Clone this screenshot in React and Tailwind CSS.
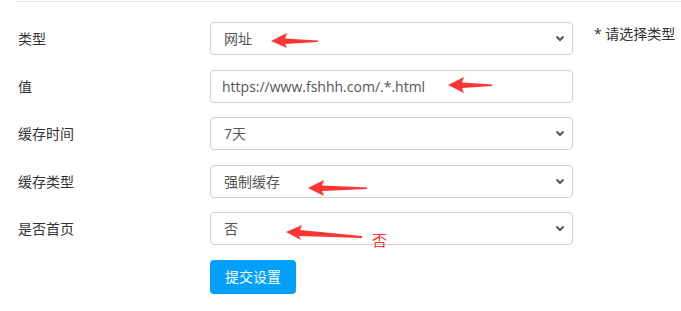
import React from "react";

const Chevron = () => (
  <svg width="10" height="7" viewBox="0 0 10 7" className="shrink-0">
    <path d="M1.5 1.5 L5 5 L8.5 1.5" fill="none" stroke="#555" strokeWidth="2" />
  </svg>
);

function SelectBox({ value }) {
  return (
    <div className="flex h-[33px] w-[363px] items-center justify-between rounded-[4px] border border-[#cfcfcf] bg-white pl-[13px] pr-[7px] text-[14px] text-[#555]">
      <span>{value}</span>
      <Chevron />
    </div>
  );
}

function Row({ label, children, hint }) {
  return (
    <div className="flex items-start">
      <div className="flex h-[33px] w-[192px] items-center text-[14px] text-[#333]">{label}</div>
      {children}
      {hint && <div className="ml-[21px] mt-[1px] text-[14px] text-[#333]">{hint}</div>}
    </div>
  );
}

export default function App() {
  return (
    <div
      className="relative h-[311px] w-[681px] overflow-hidden bg-white"
      style={{ fontFamily: '"Open Sans", "Noto Sans CJK SC", sans-serif' }}
    >
      <div className="ml-[16px] mt-[1px] border-t border-[#e6e6e6]" />
      <div className="flex flex-col gap-y-[14.5px] pl-[18px] pt-[20px]">
        <Row label="类型" hint="* 请选择类型">
          <SelectBox value="网址" />
        </Row>
        <Row label="值">
          <div className="flex h-[33px] w-[363px] items-center rounded-[4px] border border-[#cfcfcf] bg-white pl-[11px] text-[14px] text-[#555]">
            https://www.fshhh.com/.*.html
          </div>
        </Row>
        <Row label="缓存时间">
          <SelectBox value="7天" />
        </Row>
        <Row label="缓存类型">
          <SelectBox value="强制缓存" />
        </Row>
        <Row label="是否首页">
          <SelectBox value="否" />
        </Row>
        <div className="ml-[192px]">
          <button className="h-[34px] w-[86px] rounded-[4px] bg-[#039ffd] text-[14px] text-white">
            提交设置
          </button>
        </div>
      </div>

      <svg className="pointer-events-none absolute left-0 top-0" width="681" height="311">
        <g fill="#ff3535">
          <polygon points="271,41 287,33 285,38.5 318,40.5 318,42 285,44 287,48" />
          <polygon points="448,85 464,77 462,82.5 492,84.5 492,86 462,88 464,93" />
          <polygon points="308,188 324,180 322,185.5 367,187.5 367,189 322,191 324,196" />
          <polygon points="286,232 302,225 300,230 362,236 362,238 299,236 301,240" />
        </g>
        <text x="372" y="246" fill="#ff3535" fontSize="15" fontFamily="Noto Sans CJK SC">否</text>
      </svg>
    </div>
  );
}
